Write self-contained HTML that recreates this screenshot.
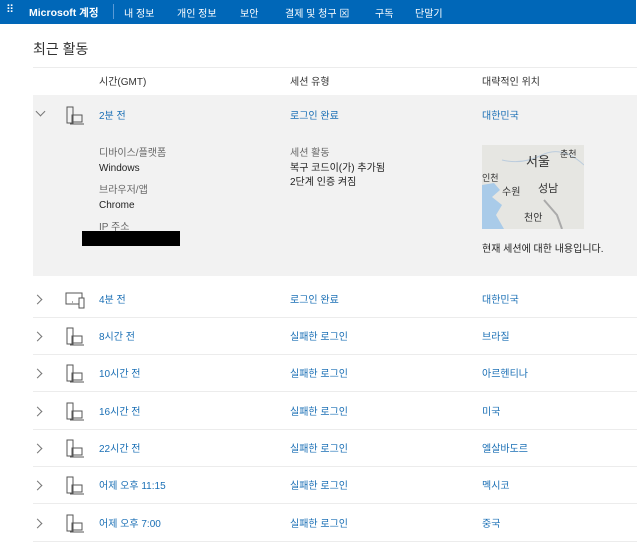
<!DOCTYPE html>
<html><head><meta charset="utf-8"><style>
*{margin:0;padding:0;box-sizing:border-box}
body{width:639px;height:530px;overflow:hidden;background:#fff;font-family:"Liberation Sans","Noto Sans CJK KR",sans-serif;position:relative;color:#222}
.nav{position:absolute;left:0;top:0;width:636px;height:24px;background:#0067b8;color:#fff;font-size:10px}
.nav span{position:absolute;top:5px}
.abs{position:absolute;white-space:nowrap;line-height:12px}
.link,.hdr,.lbl,.val{margin-top:2px}
.link{color:#1a6fb5;font-size:10px}
.hdr{font-size:10px;color:#333}
.line{position:absolute;left:33px;width:604px;height:1px;background:#ececec}
.chev{position:absolute;width:7px;height:7px;border-right:1px solid #777;border-bottom:1px solid #777}
.lbl{color:#666;font-size:10px}
.val{color:#222;font-size:10px}
</style></head><body>
<div class="nav">
<span style="left:6px;top:3px;font-size:11px;letter-spacing:-1px">⠿</span>
<span style="left:29px;font-weight:bold;font-size:10.5px">Microsoft 계정</span>
<span style="left:113px;top:4px;width:1px;height:15px;background:#5a9ad6"></span>
<span style="left:124px">내 정보</span>
<span style="left:177px">개인 정보</span>
<span style="left:240px">보안</span>
<span style="left:285px">결제 및 청구 ⊠</span>
<span style="left:375px">구독</span>
<span style="left:415px">단말기</span>
</div>
<div class="abs" style="left:33px;top:40px;font-size:14px;line-height:18px;color:#333">최근 활동</div>
<div class="line" style="top:67px"></div>
<div class="abs hdr" style="left:99px;top:75px">시간(GMT)</div>
<div class="abs hdr" style="left:290px;top:75px">세션 유형</div>
<div class="abs hdr" style="left:482px;top:75px">대략적인 위치</div>
<div class="abs" style="left:33px;top:95px;width:604px;height:181px;background:#f2f2f2"></div>
<div class="chev" style="left:37px;top:108px;transform:rotate(45deg)"></div>
<svg class="abs" style="left:65px;top:106px" width="20" height="20" viewBox="0 0 20 20" fill="none" stroke="#555"><rect x="2" y="1" width="6" height="16"/><rect x="7" y="9" width="10" height="7"/><path d="M5 18h14"/></svg>
<div class="abs link" style="left:99px;top:109px">2분 전</div>
<div class="abs link" style="left:290px;top:109px">로그인 완료</div>
<div class="abs link" style="left:482px;top:109px">대한민국</div>
<div class="abs lbl" style="left:99px;top:146px">디바이스/플랫폼</div>
<div class="abs val" style="left:99px;top:161px">Windows</div>
<div class="abs lbl" style="left:99px;top:183px">브라우저/앱</div>
<div class="abs val" style="left:99px;top:198px">Chrome</div>
<div class="abs lbl" style="left:99px;top:220px">IP 주소</div>
<div class="abs" style="left:82px;top:231px;width:98px;height:15px;background:#000"></div>
<div class="abs lbl" style="left:290px;top:146px">세션 활동</div>
<div class="abs val" style="left:290px;top:161px">복구 코드이(가) 추가됨</div>
<div class="abs val" style="left:290px;top:175px">2단계 인증 켜짐</div>
<svg class="abs" style="left:482px;top:145px" width="102" height="84" viewBox="0 0 102 84">
<rect width="102" height="84" fill="#e6e6e2"/>
<path d="M0 40 L12 38 L18 45 L10 52 L20 60 L14 70 L22 84 L0 84Z" fill="#a9cbe9"/>
<path d="M20 15 Q40 20 60 10 T102 20" stroke="#bcd" fill="none"/>
<path d="M62 55 L75 70 L80 84" stroke="#aaa" stroke-width="2" fill="none"/>
<text x="44" y="21" font-size="13" fill="#333" font-family="Noto Sans CJK KR">서울</text>
<text x="78" y="12" font-size="9" fill="#333" font-family="Noto Sans CJK KR">춘천</text>
<text x="0" y="36" font-size="9" fill="#333" font-family="Noto Sans CJK KR">인천</text>
<text x="20" y="50" font-size="10" fill="#333" font-family="Noto Sans CJK KR">수원</text>
<text x="56" y="47" font-size="11" fill="#333" font-family="Noto Sans CJK KR">성남</text>
<text x="42" y="76" font-size="10" fill="#333" font-family="Noto Sans CJK KR">천안</text>
</svg>
<div class="abs val" style="left:482px;top:242px">현재 세션에 대한 내용입니다.</div>

<div class="chev" style="left:34px;top:296px;transform:rotate(-45deg)"></div>
<svg class="abs" style="left:65px;top:290px" width="22" height="20" viewBox="0 0 22 20" fill="none" stroke="#555"><rect x="1" y="3" width="16" height="11"/><rect x="14" y="8" width="5" height="10" fill="#fff"/><path d="M7 12h1"/></svg>
<div class="abs link" style="left:99px;top:293px">4분 전</div>
<div class="abs link" style="left:290px;top:293px">로그인 완료</div>
<div class="abs link" style="left:482px;top:293px">대한민국</div>
<div class="line" style="top:317px"></div>

<div id="rows"></div>
<script>
var d=[["8시간 전","브라질"],["10시간 전","아르헨티나"],["16시간 전","미국"],["22시간 전","엘살바도르"],["어제 오후 11:15","멕시코"],["어제 오후 7:00","중국"]];
var h="";
d.forEach(function(r,i){var y=330+i*37.3;
h+='<div class="chev" style="left:34px;top:'+(y+3)+'px;transform:rotate(-45deg)"></div>';
h+='<svg class="abs" style="left:65px;top:'+(y-3)+'px" width="20" height="20" viewBox="0 0 20 20" fill="none" stroke="#555"><rect x="2" y="1" width="6" height="16"/><rect x="7" y="9" width="10" height="7"/><path d="M5 18h14"/></svg>';
h+='<div class="abs link" style="left:99px;top:'+y+'px">'+r[0]+'</div>';
h+='<div class="abs link" style="left:290px;top:'+y+'px">실패한 로그인</div>';
h+='<div class="abs link" style="left:482px;top:'+y+'px">'+r[1]+'</div>';
h+='<div class="line" style="top:'+(y+24)+'px"></div>';});
document.getElementById("rows").innerHTML=h;
</script>
</body></html>
